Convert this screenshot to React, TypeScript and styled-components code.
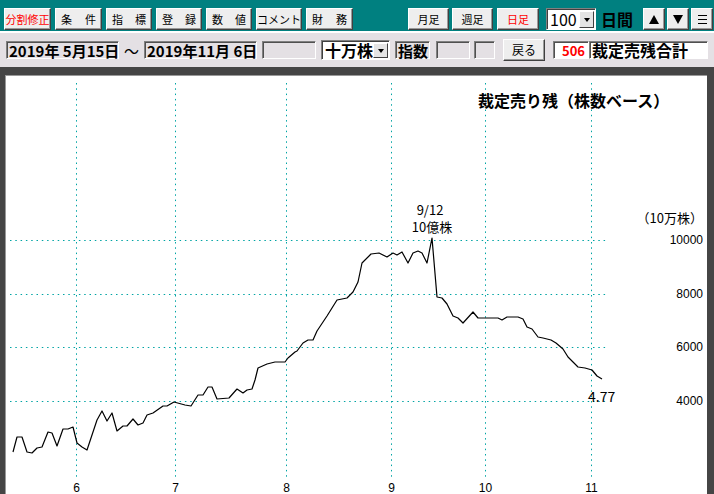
import React from 'react';
import styled, { createGlobalStyle } from 'styled-components';

const GlobalStyle = createGlobalStyle`
  html, body {
    margin: 0;
    padding: 0;
    overflow: hidden;
    background: #e4e0e4;
  }
  body {
    font-family: "Noto Sans CJK JP", "Liberation Sans", sans-serif;
  }
`;

const Page = styled.div`
  width: 714px;
  height: 494px;
  overflow: hidden;
`;

const Toolbar = styled.div`
  display: flex;
  align-items: flex-start;
  box-sizing: border-box;
  height: 33px;
  padding: 8px 0 0 4px;
  background: #008080;
  border-bottom: 2px solid #fff;
`;

const ToolButton = styled.button<{ $w: number; $ml?: number; $red?: boolean; $spread?: boolean }>`
  box-sizing: border-box;
  width: ${(p) => p.$w}px;
  height: 22px;
  margin: 0 0 0 ${(p) => p.$ml ?? 0}px;
  padding: 0 ${(p) => (p.$spread ? 5 : 0)}px;
  display: flex;
  align-items: center;
  justify-content: ${(p) => (p.$spread ? 'space-between' : 'center')};
  background: #eeeeee;
  border: 1px solid;
  border-color: #fff #404040 #404040 #fff;
  box-shadow: inset -1px -1px 0 #9a9a9a;
  font-family: "Noto Sans CJK JP", sans-serif;
  font-size: 11px;
  line-height: 1;
  color: ${(p) => (p.$red ? '#f00' : '#000')};
  white-space: nowrap;
`;

const Combo = styled.div<{ $w: number; $ml?: number; $h?: number }>`
  box-sizing: border-box;
  width: ${(p) => p.$w}px;
  height: ${(p) => p.$h ?? 22}px;
  margin-left: ${(p) => p.$ml ?? 0}px;
  display: flex;
  align-items: stretch;
  background: #fff;
  border: 1px solid;
  border-color: #808080 #fff #fff #808080;
  box-shadow: inset 1px 1px 0 #404040;
`;

const ComboText = styled.div<{ $bold?: boolean; $size: number }>`
  flex: 1;
  display: flex;
  align-items: center;
  padding-left: 3px;
  font-family: "Noto Sans CJK JP", sans-serif;
  font-size: ${(p) => p.$size}px;
  font-weight: ${(p) => (p.$bold ? 700 : 400)};
  color: #000;
  line-height: 1;
  white-space: nowrap;
`;

const ComboArrow = styled.div`
  box-sizing: border-box;
  width: 15px;
  margin: 2px 1px 1px 0;
  display: flex;
  align-items: center;
  justify-content: center;
  background: #e4e4e4;
  border: 1px solid;
  border-color: #fff #404040 #404040 #fff;
  &::after {
    content: '';
    border-left: 3px solid transparent;
    border-right: 3px solid transparent;
    border-top: 4px solid #000;
  }
`;

const DaysLabel = styled.span`
  margin-left: 5px;
  font-size: 16px;
  font-weight: 700;
  line-height: 22px;
  color: #000;
`;

const Triangle = styled.span<{ $up?: boolean }>`
  width: 0;
  height: 0;
  border-left: 5px solid transparent;
  border-right: 5px solid transparent;
  ${(p) => (p.$up ? 'border-bottom: 9px solid #000;' : 'border-top: 9px solid #000;')}
`;

const FilterRow = styled.div`
  display: flex;
  align-items: center;
  box-sizing: border-box;
  height: 34px;
  padding-left: 6px;
`;

const Field = styled.div<{ $w: number; $ml?: number; $white?: boolean; $red?: boolean; $size?: number }>`
  box-sizing: border-box;
  width: ${(p) => p.$w}px;
  height: 18px;
  margin-left: ${(p) => p.$ml ?? 0}px;
  display: flex;
  align-items: center;
  justify-content: ${(p) => (p.$red ? 'flex-end' : 'flex-start')};
  padding: 0 3px 0 2px;
  background: ${(p) => (p.$white ? '#fff' : 'transparent')};
  border: 1px solid;
  border-color: #808080 #fff #fff #808080;
  box-shadow: inset 1px 1px 0 #505050;
  font-family: "Noto Sans CJK JP", sans-serif;
  font-size: ${(p) => p.$size ?? 15}px;
  font-weight: 700;
  line-height: 1;
  color: ${(p) => (p.$red ? '#f00' : '#000')};
  white-space: nowrap;
`;

const Tilde = styled.span`
  width: 25px;
  text-align: center;
  font-size: 15px;
  color: #000;
`;

const BackButton = styled(ToolButton)`
  height: 22px;
  font-size: 12px;
`;

const ChartPanel = styled.div`
  box-sizing: border-box;
  height: 440px;
  background: #fff;
  border-style: solid;
  border-color: #454545;
  border-width: 8px 7px 0 5px;
  box-shadow: inset 1px 1px 0 #999;
`;

const ChartSvg = styled.svg`
  display: block;
`;

const Title = styled.text`
  font-family: "Noto Sans CJK JP", sans-serif;
  font-size: 16px;
  font-weight: 700;
  fill: #000;
`;

const Note = styled.text<{ $size?: number }>`
  font-family: "Noto Sans CJK JP", "Liberation Sans", sans-serif;
  font-size: ${(p) => p.$size ?? 13}px;
  fill: #000;
`;

const AxisLabel = styled.text`
  font-family: "Liberation Sans", sans-serif;
  font-size: 12px;
  fill: #000;
`;

const points: [number, number][] = [
  [13, 452], [17, 437], [22, 437], [27, 452], [32, 453], [37, 448], [42, 447], [48, 432], [52, 433],
  [57, 446], [63, 429], [68, 429], [73, 427], [77, 443], [82, 447], [87, 450], [97, 420], [102, 411],
  [107, 421], [112, 413], [117, 431], [123, 426], [127, 426], [133, 419], [138, 425], [143, 423],
  [147, 415], [153, 413], [163, 406], [167, 406], [174, 402], [185, 405], [191, 406], [198, 395],
  [203, 395], [208, 387], [212, 387], [217, 399], [229, 398], [237, 389], [243, 393], [247, 390],
  [252, 389], [255, 380], [258, 368], [267, 364], [275, 362], [285, 362], [288, 358], [295, 352],
  [297, 351], [303, 343], [308, 340], [313, 340], [317, 331], [327, 316], [337, 300], [347, 298],
  [353, 292], [358, 282], [362, 263], [371, 254], [379, 253], [387, 257], [393, 253], [397, 255],
  [402, 252], [408, 263], [413, 253], [418, 251], [422, 253], [427, 263], [432, 238], [437, 297],
  [442, 298], [447, 304], [453, 316], [458, 318], [463, 323], [473, 312], [478, 318], [498, 318],
  [502, 320], [507, 317], [518, 317], [523, 319], [527, 327], [532, 329], [538, 337], [543, 338],
  [551, 340], [556, 343], [563, 349], [568, 357], [573, 362], [578, 367], [585, 368], [592, 370],
  [597, 376], [602, 379],
];

const months = [
  { label: '6', x: 76 },
  { label: '7', x: 175 },
  { label: '8', x: 286 },
  { label: '9', x: 391 },
  { label: '10', x: 485 },
  { label: '11', x: 591 },
];

const levels = [
  { label: '10000', y: 240 },
  { label: '8000', y: 294 },
  { label: '6000', y: 347 },
  { label: '4000', y: 401 },
];

const GRID = '#00a4a4';

function MenuIcon() {
  return (
    <svg width="11" height="11" viewBox="0 0 11 11">
      <path d="M1 1.5h9M1 5.5h9M1 9.5h9" stroke="#000" strokeWidth="1" />
    </svg>
  );
}

function Chart() {
  return (
    <ChartSvg width={702} height={432} viewBox="5 75 702 432">
      {months.map((m) => (
        <line key={m.label} x1={m.x + 0.5} x2={m.x + 0.5} y1={83} y2={478} stroke={GRID} strokeDasharray="1.5 3.8" />
      ))}
      {levels.map((l) => (
        <line key={l.label} x1={10} x2={608} y1={l.y + 0.5} y2={l.y + 0.5} stroke={GRID} strokeDasharray="1.5 3.8" />
      ))}
      <polyline
        points={points.map(([x, y]) => `${x},${y}`).join(' ')}
        fill="none"
        stroke="#000"
        strokeWidth={1.2}
        strokeLinejoin="round"
      />
      <Title x={478} y={107}>裁定売り残（株数ベース）</Title>
      <Note x={430} y={215} textAnchor="middle">9/12</Note>
      <Note x={432} y={232} textAnchor="middle">10億株</Note>
      <Note x={588} y={402} $size={14}>4.77</Note>
      <Note x={703} y={223} textAnchor="end">（10万株）</Note>
      {levels.map((l) => (
        <AxisLabel key={l.label} x={703} y={l.y + 4} textAnchor="end">{l.label}</AxisLabel>
      ))}
      {months.map((m) => (
        <AxisLabel key={m.label} x={m.x + 0.5} y={492} textAnchor="middle">{m.label}</AxisLabel>
      ))}
    </ChartSvg>
  );
}

export default function App() {
  return (
    <Page>
      <GlobalStyle />
      <Toolbar>
        <ToolButton $w={47} $red>分割修正</ToolButton>
        <ToolButton $w={47} $ml={4} $spread><span>条</span><span>件</span></ToolButton>
        <ToolButton $w={46} $ml={4} $spread><span>指</span><span>標</span></ToolButton>
        <ToolButton $w={46} $ml={4} $spread><span>登</span><span>録</span></ToolButton>
        <ToolButton $w={46} $ml={4} $spread><span>数</span><span>値</span></ToolButton>
        <ToolButton $w={46} $ml={4}>コメント</ToolButton>
        <ToolButton $w={47} $ml={4} $spread><span>財</span><span>務</span></ToolButton>
        <ToolButton $w={41} $ml={55}>月足</ToolButton>
        <ToolButton $w={41} $ml={3}>週足</ToolButton>
        <ToolButton $w={42} $ml={4} $red>日足</ToolButton>
        <Combo $w={50} $ml={7}>
          <ComboText $size={16}>100</ComboText>
          <ComboArrow />
        </Combo>
        <DaysLabel>日間</DaysLabel>
        <ToolButton $w={22} $ml={10}><Triangle $up /></ToolButton>
        <ToolButton $w={22} $ml={2}><Triangle /></ToolButton>
        <ToolButton $w={22} $ml={2}><MenuIcon /></ToolButton>
      </Toolbar>
      <FilterRow>
        <Field $w={113}>2019年 5月15日</Field>
        <Tilde>～</Tilde>
        <Field $w={113}>2019年11月 6日</Field>
        <Field $w={54} $ml={5} />
        <Combo $w={69} $ml={5} $h={20}>
          <ComboText $size={16} $bold>十万株</ComboText>
          <ComboArrow />
        </Combo>
        <Field $w={35} $ml={5} $size={15}>指数</Field>
        <Field $w={34} $ml={6} />
        <Field $w={21} $ml={4} />
        <BackButton $w={42} $ml={8}>戻る</BackButton>
        <Field $w={36} $ml={8} $white $red $size={13}>506</Field>
        <Field $w={119} $white $size={16}>裁定売残合計</Field>
      </FilterRow>
      <ChartPanel>
        <Chart />
      </ChartPanel>
    </Page>
  );
}
